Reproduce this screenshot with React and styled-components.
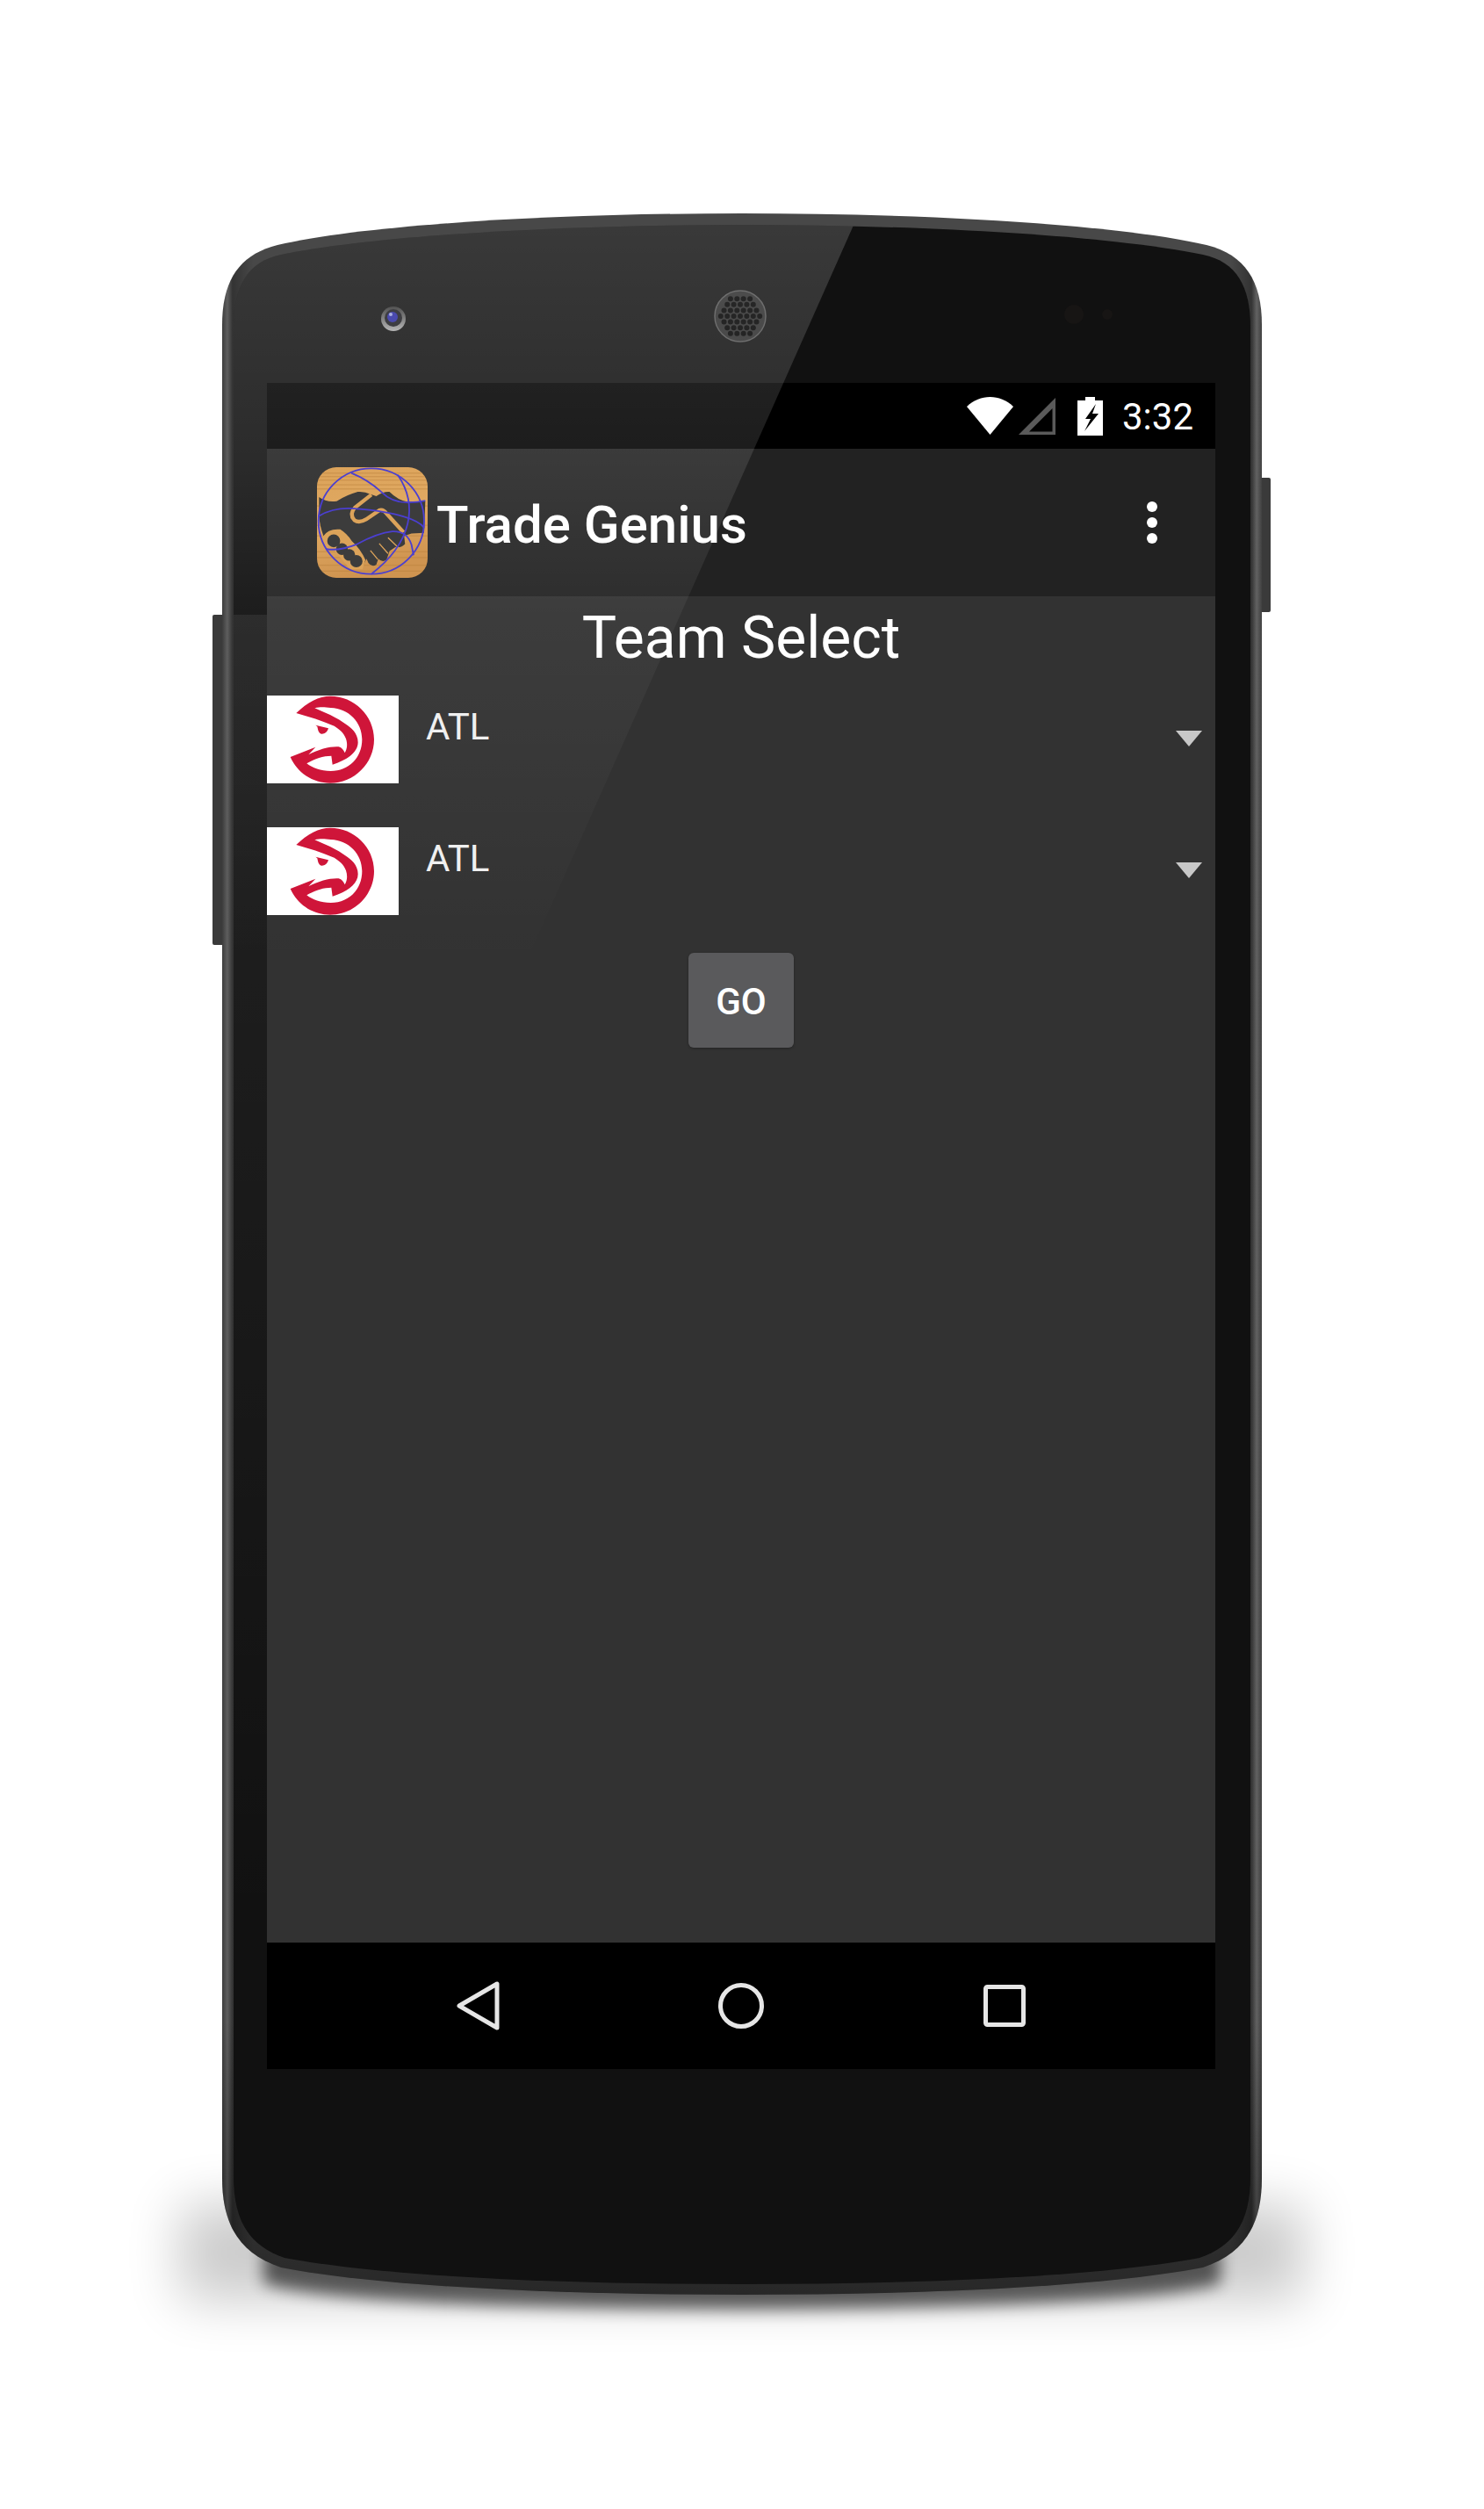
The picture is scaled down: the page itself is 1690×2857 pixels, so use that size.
import React from 'react';
import styled, { createGlobalStyle } from 'styled-components';

const GlobalStyle = createGlobalStyle`
  html, body {
    margin: 0;
    padding: 0;
    background: #fff;
  }
  body {
    font-family: Roboto, "Liberation Sans", sans-serif;
  }
`;

const Page = styled.div`
  position: relative;
  isolation: isolate;
  width: 1690px;
  height: 2857px;
  padding: 436px 0 0 304px;
  box-sizing: border-box;
  background: #fff;
  overflow: hidden;
`;

const PhoneArt = styled.svg`
  position: absolute;
  left: 0;
  top: 0;
  z-index: -1;
`;

const GlareArt = styled.svg`
  position: absolute;
  left: 0;
  top: 0;
  z-index: 1;
  pointer-events: none;
`;

const Screen = styled.div`
  display: flex;
  flex-direction: column;
  width: 1080px;
  height: 1920px;
  color: #fff;
`;

const StatusBar = styled.div`
  display: flex;
  align-items: center;
  justify-content: flex-end;
  flex: 0 0 75px;
  padding-right: 25px;
  background: #000;
`;

const StatusIcon = styled.svg`
  display: block;
  margin-left: ${(p) => p.$gap}px;
`;

const Clock = styled.span`
  margin-left: 22px;
  padding-top: 3px;
  font-size: 42px;
  line-height: 50px;
  position: relative;
  z-index: 2;
`;

const ActionBar = styled.div`
  display: flex;
  align-items: center;
  flex: 0 0 168px;
  padding: 0 66px 0 57px;
  background: #222;
`;

const AppIcon = styled.svg`
  display: block;
  position: relative;
  z-index: 2;
  flex: none;
`;

const AppTitle = styled.h1`
  flex: 1;
  margin: 0 0 0 10px;
  padding-top: 6px;
  font-size: 60px;
  line-height: 70px;
  font-weight: 500;
  position: relative;
  z-index: 2;
`;

const Overflow = styled.div`
  display: flex;
  flex-direction: column;
  gap: 6px;
  position: relative;
  z-index: 2;
`;

const Dot = styled.span`
  width: 12px;
  height: 12px;
  border-radius: 50%;
  background: #fff;
`;

const Content = styled.main`
  display: flex;
  flex-direction: column;
  flex: 1;
  background: #323232;
`;

const Heading = styled.h2`
  margin: 0 0 25px;
  padding-top: 4px;
  height: 84px;
  font-size: 66px;
  line-height: 88px;
  font-weight: 400;
  text-align: center;
  position: relative;
  z-index: 2;
`;

const SpinnerRow = styled.div`
  display: flex;
  height: 100px;
  margin-bottom: 50px;
`;

const TeamTile = styled.svg`
  display: block;
  flex: none;
  background: #fff;
  position: relative;
  z-index: 2;
`;

const SpinnerLabel = styled.span`
  margin: 11px 0 0 31px;
  font-size: 42px;
  line-height: 49px;
  color: #f0f0f0;
  position: relative;
  z-index: 2;
`;

const SpinnerArrow = styled.span`
  width: 0;
  height: 0;
  margin: 40px 15px 0 auto;
  border-left: 15px solid transparent;
  border-right: 15px solid transparent;
  border-top: 18px solid #c8c8c8;
`;

const GoButton = styled.button`
  align-self: center;
  width: 120px;
  height: 108px;
  margin-top: -7px;
  padding: 3px 0 0;
  border: 0;
  border-radius: 6px;
  background: #5a5a5c;
  color: #fff;
  font-family: Roboto, "Liberation Sans", sans-serif;
  font-size: 42px;
  font-weight: 500;
  box-shadow: 0 1px 3px rgba(0, 0, 0, 0.3);
`;

const NavBar = styled.nav`
  display: flex;
  align-items: center;
  flex: 0 0 144px;
  padding: 0 90px;
  background: #000;
`;

const NavSlot = styled.div`
  display: flex;
  justify-content: center;
  flex: 1;
`;

const OUTER =
  'M253 370 C253 320 272 290 316 279 C420 255 640 243 845 243 C1050 243 1270 255 1374 279 C1418 290 1437 320 1437 370 L1437 2480 C1437 2530 1420 2565 1370 2582 C1250 2605 1040 2613 845 2613 C650 2613 440 2605 320 2582 C270 2565 253 2530 253 2480 Z';
const INNER =
  'M266 372 C266 326 282 298 320 290 C425 268 645 256 845 256 C1045 256 1265 268 1370 290 C1408 298 1424 326 1424 372 L1424 2478 C1424 2524 1410 2556 1366 2571 C1248 2593 1040 2601 845 2601 C650 2601 442 2593 324 2571 C280 2556 266 2524 266 2478 Z';

// speaker holes on a hex grid
const speakerHoles = [];
for (let row = -3; row <= 3; row++) {
  for (let col = -4; col <= 4; col++) {
    const x = 843 + col * 7.4 + (row % 2 ? 3.7 : 0);
    const y = 360 + row * 6.6;
    if (Math.hypot(x - 843, y - 360) < 24) speakerHoles.push([x, y]);
  }
}

const PhoneBody = () => (
  <PhoneArt width="1690" height="2857" viewBox="0 0 1690 2857">
    <defs>
      <filter id="softWide" x="-20%" y="-100%" width="140%" height="300%">
        <feGaussianBlur stdDeviation="30" />
      </filter>
      <filter id="softNear" x="-10%" y="-100%" width="120%" height="300%">
        <feGaussianBlur stdDeviation="9" />
      </filter>
      <linearGradient id="band" gradientUnits="userSpaceOnUse" x1="253" y1="0" x2="1437" y2="0">
        <stop offset="0" stopColor="#3c3c3c" />
        <stop offset="0.005" stopColor="#5e5e5e" />
        <stop offset="0.01" stopColor="#333" />
        <stop offset="0.03" stopColor="#484848" />
        <stop offset="0.97" stopColor="#484848" />
        <stop offset="0.99" stopColor="#333" />
        <stop offset="0.995" stopColor="#626262" />
        <stop offset="1" stopColor="#404040" />
      </linearGradient>
      <linearGradient id="bandFade" gradientUnits="userSpaceOnUse" x1="0" y1="2300" x2="0" y2="2613">
        <stop offset="0" stopColor="#000" stopOpacity="0" />
        <stop offset="1" stopColor="#000" stopOpacity="0.45" />
      </linearGradient>
      <linearGradient id="camRing" x1="0" y1="0" x2="0" y2="1">
        <stop offset="0" stopColor="#333" />
        <stop offset="1" stopColor="#aaa" />
      </linearGradient>
      <linearGradient id="leftEdge" x1="0" y1="0" x2="0" y2="1">
        <stop offset="0" stopColor="#fff" stopOpacity="0.07" />
        <stop offset="1" stopColor="#fff" stopOpacity="0" />
      </linearGradient>
    </defs>
    <rect x="205" y="2510" width="1280" height="110" fill="#000" opacity="0.2" filter="url(#softWide)" />
    <path
      d="M300 2560 H1390 V2600 Q1300 2628 845 2630 Q390 2628 300 2600 Z"
      fill="#000"
      opacity="0.6"
      filter="url(#softNear)"
    />
    <rect x="242" y="700" width="16" height="376" rx="2" fill="#3a3a3a" />
    <rect x="1432" y="544" width="15" height="153" rx="2" fill="#3a3a3a" />
    <path d={OUTER} fill="url(#band)" />
    <path d={OUTER} fill="url(#bandFade)" />
    <path d={INNER} fill="#111" />
    <rect x="266" y="700" width="38" height="1500" fill="url(#leftEdge)" />

    <circle cx="448" cy="363" r="14" fill="url(#camRing)" />
    <circle cx="448" cy="362" r="10" fill="#1d1d22" />
    <circle cx="447" cy="361" r="6" fill="#2b2ba0" />
    <circle cx="445" cy="358" r="2" fill="#9aa0d8" />

    <circle cx="843" cy="360" r="29" fill="#2c2c2c" stroke="#555" strokeWidth="1.5" />
    {speakerHoles.map(([x, y]) => (
      <circle key={`${x}-${y}`} cx={x} cy={y} r="3" fill="#000" />
    ))}

    <circle cx="1223" cy="358" r="11" fill="#171514" />
    <circle cx="1261" cy="358" r="6" fill="#171514" />
  </PhoneArt>
);

const Glare = () => (
  <GlareArt width="1690" height="2857" viewBox="0 0 1690 2857">
    <defs>
      <clipPath id="bodyClip">
        <path d={INNER} />
      </clipPath>
      <linearGradient id="glare" gradientUnits="userSpaceOnUse" x1="0" y1="250" x2="0" y2="1100">
        <stop offset="0" stopColor="#fff" stopOpacity="0.17" />
        <stop offset="0.3" stopColor="#fff" stopOpacity="0.115" />
        <stop offset="0.53" stopColor="#fff" stopOpacity="0.05" />
        <stop offset="1" stopColor="#fff" stopOpacity="0" />
      </linearGradient>
    </defs>
    <polygon
      points="253,243 978,243 597,1100 253,1100"
      fill="url(#glare)"
      clipPath="url(#bodyClip)"
    />
  </GlareArt>
);

const Wifi = () => (
  <StatusIcon $gap={0} width="53" height="43" viewBox="0 0 53 43">
    <path d="M26.5 43 L0 11 C8 3.5 17 0 26.5 0 C36 0 45 3.5 53 11 Z" fill="#fff" />
  </StatusIcon>
);

const Signal = () => (
  <StatusIcon $gap={6} width="42" height="42" viewBox="0 0 42 42">
    <path d="M0 42 L42 0 V42 Z M12 38.5 H38.5 V12 Z" fill="#5a5a5a" fillRule="evenodd" />
  </StatusIcon>
);

const Battery = () => (
  <StatusIcon $gap={25} width="29" height="44" viewBox="0 0 29 44">
    <path d="M9 0 H20 V4 H29 V44 H0 V4 H9 Z" fill="#fff" />
    <path d="M21 8 L9 25 H15 L8 39 L24 19 H17 Z" fill="#000" />
  </StatusIcon>
);

const TradeGeniusIcon = () => (
  <AppIcon width="126" height="126" viewBox="183 66 377 377">
    <defs>
      <linearGradient id="wood" x1="0" y1="0" x2="0.25" y2="1">
        <stop offset="0" stopColor="#dca35a" />
        <stop offset="0.5" stopColor="#e0a962" />
        <stop offset="1" stopColor="#cf9450" />
      </linearGradient>
      <clipPath id="iconClip">
        <rect x="183" y="66" width="377" height="377" rx="66" />
      </clipPath>
    </defs>
    <g clipPath="url(#iconClip)">
      <rect x="183" y="66" width="377" height="377" fill="url(#wood)" />
      {[84, 96, 108, 124, 138, 196, 262, 298, 352, 372, 398, 418].map((y) => (
        <rect key={y} x="183" y={y} width="377" height="4" fill="#b67c3a" opacity="0.4" />
      ))}
      <path
        d="M190 168 Q215 187 250 182 Q285 160 322 150 Q345 148 365 158 L385 165 Q410 148 430 150 Q460 180 492 184 L552 182 L548 290 L505 292 L480 300 L483 328 Q470 342 450 338 L430 352 L420 382 Q405 392 392 378 L385 398 Q370 408 358 392 L352 378 L338 404 Q315 415 300 400 L205 300 Q192 265 190 232 Z"
        fill="#3c3c3c"
      />
      <path
        d="M368 160 L312 204 Q292 226 310 246 Q326 258 350 244 L395 213 Q408 208 420 224 L478 288"
        fill="none"
        stroke="#dca35a"
        strokeWidth="13"
      />
      <path
        d="M203 302 Q222 274 262 278 Q285 292 302 318 Q332 345 348 382 L338 414 L296 414 Z"
        fill="#dca35a"
      />
      <circle cx="240" cy="317" r="22" fill="#3c3c3c" />
      <circle cx="268" cy="345" r="20" fill="#3c3c3c" />
      <circle cx="293" cy="365" r="20" fill="#3c3c3c" />
      <circle cx="317" cy="386" r="21" fill="#3c3c3c" />
      <path d="M425 306 L460 340 M395 326 L425 360 M365 350 L390 380" stroke="#dca35a" strokeWidth="4" />
    </g>
    <g fill="none" stroke="#4b3fd0" strokeWidth="5.5">
      <circle cx="368" cy="250" r="180" />
      <path d="M300 86 Q355 108 402 150 Q440 188 495 186 Q525 186 552 180" />
      <path d="M190 232 Q240 202 310 207 Q420 215 480 235 Q530 250 548 272" />
      <path d="M215 345 Q260 352 320 328 Q390 290 440 285 Q490 283 505 330 L512 366" />
      <path d="M458 92 Q512 170 492 258 Q470 352 368 430" />
    </g>
  </AppIcon>
);

const HawkTile = () => (
  <TeamTile width="150" height="100" viewBox="-48 12 450 300">
    <path
      fillRule="evenodd"
      fill="#cf1539"
      d="M52 72 C90 35 130 14 168 14 C250 14 318 80 318 162 C318 244 250 311 168 311 C108 311 55 275 32 222 L118 188 L94 214 C130 195 170 185 197 187 C208 190 214 198 218 208 C226 195 228 178 222 160 C214 138 200 128 182 116 C140 98 95 84 52 72 Z
      M115 55 C135 50 150 52 170 54 C232 56 277 104 277 162 C277 224 232 270 170 270 C135 270 108 260 88 244 C115 228 145 218 172 218 L176 248 C222 234 263 208 263 172 C263 140 238 120 222 110 C208 100 192 90 168 78 C150 70 130 62 115 55 Z"
    />
    <path d="M118 113 L162 124 C158 138 148 144 138 143 C128 141 126 128 124 118 Z" fill="#cf1539" />
  </TeamTile>
);

const TeamSpinner = ({ team }) => (
  <SpinnerRow>
    <HawkTile />
    <SpinnerLabel>{team}</SpinnerLabel>
    <SpinnerArrow />
  </SpinnerRow>
);

const App = () => (
  <>
    <GlobalStyle />
    <Page>
      <PhoneBody />
      <Screen>
        <StatusBar>
          <Wifi />
          <Signal />
          <Battery />
          <Clock>3:32</Clock>
        </StatusBar>
        <ActionBar>
          <TradeGeniusIcon />
          <AppTitle>Trade Genius</AppTitle>
          <Overflow>
            <Dot />
            <Dot />
            <Dot />
          </Overflow>
        </ActionBar>
        <Content>
          <Heading>Team Select</Heading>
          <TeamSpinner team="ATL" />
          <TeamSpinner team="ATL" />
          <GoButton>GO</GoButton>
        </Content>
        <NavBar>
          <NavSlot>
            <svg width="49" height="56" viewBox="0 0 49 56">
              <path
                d="M46 3 V53 L3 28 Z"
                fill="none"
                stroke="#e6e6e6"
                strokeWidth="5"
                strokeLinejoin="round"
              />
            </svg>
          </NavSlot>
          <NavSlot>
            <svg width="52" height="52" viewBox="0 0 52 52">
              <circle cx="26" cy="26" r="23.5" fill="none" stroke="#e6e6e6" strokeWidth="5" />
            </svg>
          </NavSlot>
          <NavSlot>
            <svg width="48" height="48" viewBox="0 0 48 48">
              <rect x="2.5" y="2.5" width="43" height="43" rx="2" fill="none" stroke="#e6e6e6" strokeWidth="5" />
            </svg>
          </NavSlot>
        </NavBar>
      </Screen>
      <Glare />
    </Page>
  </>
);

export default App;
